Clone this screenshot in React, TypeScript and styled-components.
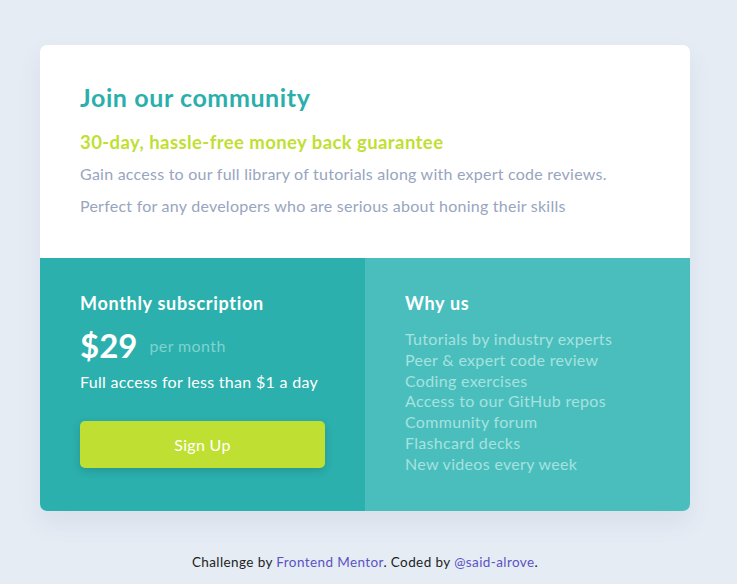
import React from "react";
import styled, { createGlobalStyle } from "styled-components";

const Global = createGlobalStyle`
  html, body { margin: 0; padding: 0; }
  body {
    background: #e5ecf4;
    font-family: "Lato", "Liberation Sans", sans-serif;
  }
`;

const Page = styled.main`
  width: 650px;
  padding: 45px 0 0 40px;
`;

const Card = styled.section`
  width: 650px;
  border-radius: 7px;
  overflow: hidden;
  box-shadow: 0 12px 24px rgba(60, 80, 120, 0.08);
  background: #fff;
`;

const Top = styled.div`
  padding: 40px 40px 40px;
  display: flex;
  flex-direction: column;
`;

const Title = styled.h1`
  margin: 0;
  font-size: 25px;
  letter-spacing: 0.6px;
  line-height: 24px;
  font-weight: 700;
  color: #2aafac;
`;

const Guarantee = styled.h2`
  margin: 21px 0 0;
  font-size: 18.5px;
  letter-spacing: 0.42px;
  line-height: 24px;
  font-weight: 700;
  color: #bfdf32;
`;

const Text = styled.p`
  margin: 8px 0 0;
  font-size: 16px;
  letter-spacing: 0.24px;
  line-height: 24px;
  color: #98a5c0;
`;

const Bottom = styled.div`
  display: grid;
  grid-template-columns: 325px 325px;
`;

const Panel = styled.div<{ $tone: "dark" | "light" }>`
  background: ${(p) => (p.$tone === "dark" ? "#2bb0ad" : "#4abebd")};
  padding: 35px 40px 36px;
  display: flex;
  flex-direction: column;
  color: #fff;
`;

const PanelTitle = styled.h3`
  margin: 0;
  font-size: 18px;
  letter-spacing: 0.7px;
  line-height: 20px;
  font-weight: 700;
`;

const PriceRow = styled.div`
  margin-top: 14px;
  height: 36px;
  display: flex;
  align-items: center;
  gap: 12px;
`;

const Price = styled.span`
  font-size: 33px;
  font-weight: 700;
  line-height: 36px;
`;

const Per = styled.span`
  font-size: 16px;
  letter-spacing: 0.4px;
  color: #7fd3d0;
`;

const Access = styled.p`
  margin: 9px 0 0;
  font-size: 16px;
  letter-spacing: 0.3px;
  line-height: 20px;
`;

const SignUp = styled.button`
  margin: 29px 0 6px;
  width: 245px;
  height: 47px;
  border: none;
  border-radius: 5px;
  background: #bfdf32;
  color: #fff;
  font-family: inherit;
  font-size: 16px;
  letter-spacing: 0.3px;
  box-shadow: 0 3px 8px rgba(0, 0, 0, 0.15);
`;

const List = styled.ul`
  list-style: none;
  margin: 16px 0 0;
  padding: 0;
`;

const Item = styled.li`
  font-size: 16px;
  letter-spacing: 0.32px;
  line-height: 20.8px;
  color: #a6e2df;
`;

const Footer = styled.footer`
  width: 650px;
  margin-top: 43px;
  text-align: center;
  font-size: 13.5px;
  letter-spacing: 0.4px;
  color: #222;
`;

const Link = styled.a`
  color: #5a52c4;
  text-decoration: none;
`;

const features = [
  "Tutorials by industry experts",
  "Peer & expert code review",
  "Coding exercises",
  "Access to our GitHub repos",
  "Community forum",
  "Flashcard decks",
  "New videos every week",
];

export default function App() {
  return (
    <>
      <Global />
      <Page>
        <Card>
          <Top>
            <Title>Join our community</Title>
            <Guarantee>30-day, hassle-free money back guarantee</Guarantee>
            <Text>Gain access to our full library of tutorials along with expert code reviews.</Text>
            <Text>Perfect for any developers who are serious about honing their skills</Text>
          </Top>
          <Bottom>
            <Panel $tone="dark">
              <PanelTitle>Monthly subscription</PanelTitle>
              <PriceRow>
                <Price>$29</Price>
                <Per>per month</Per>
              </PriceRow>
              <Access>Full access for less than $1 a day</Access>
              <SignUp>Sign Up</SignUp>
            </Panel>
            <Panel $tone="light">
              <PanelTitle>Why us</PanelTitle>
              <List>
                {features.map((f) => (
                  <Item key={f}>{f}</Item>
                ))}
              </List>
            </Panel>
          </Bottom>
        </Card>
        <Footer>
          Challenge by <Link href="#">Frontend Mentor</Link>. Coded by <Link href="#">@said-alrove</Link>.
        </Footer>
      </Page>
    </>
  );
}
